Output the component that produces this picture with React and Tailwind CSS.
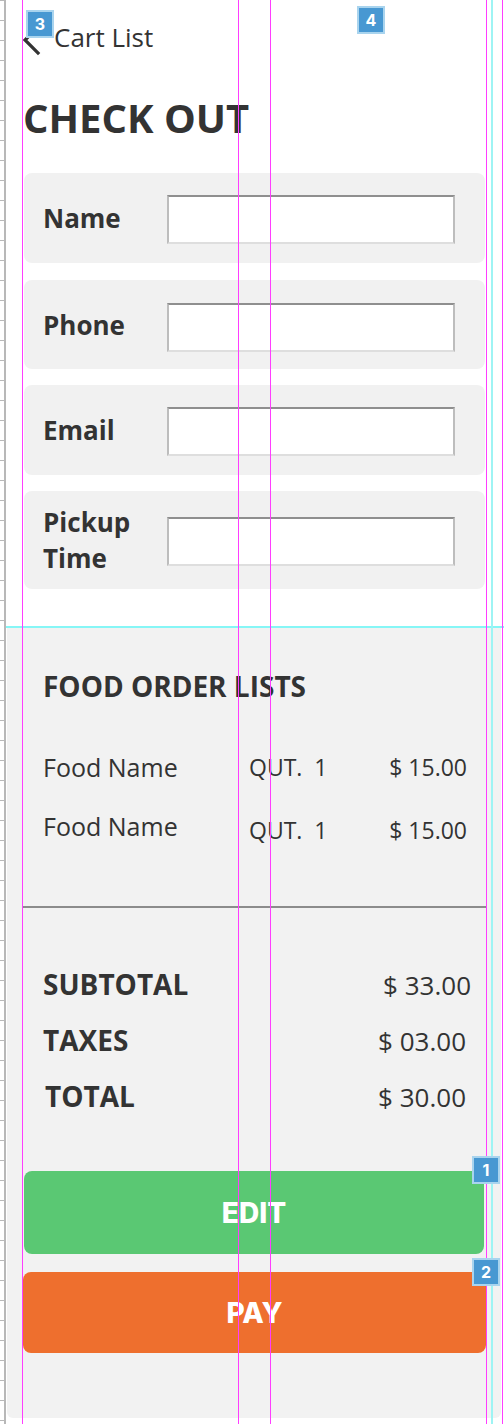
import React from 'react';

const labelCls = "text-[26px] font-bold leading-[36px] text-[#333]";

const FieldCard = ({ label, height, inputOffset = '' }) => (
  <div className={`flex items-center rounded-lg bg-[#f1f1f1] pl-[19px] pr-[30px] ${height}`}>
    <div className={`w-[124px] ${labelCls}`}>{label}</div>
    <input
      className={`h-[49px] flex-1 bg-white border-2 border-t-[#8f8f8f] border-l-[#bdbdbd] border-r-[#bdbdbd] border-b-[#dedede] outline-none ${inputOffset}`}
    />
  </div>
);

const Badge = ({ n, className }) => (
  <div
    className={`absolute z-20 flex h-[28px] w-[28px] items-center justify-center border-2 border-[#a9d4ee] bg-[#4898d2] text-[16px] font-bold text-white font-['Inter',sans-serif] ${className}`}
  >
    {n}
  </div>
);

// design-tool guides drawn over the page
const Guides = () => (
  <>
    <div className="absolute left-0 top-0 bottom-0 w-[7px] z-10">
      <div className="absolute left-[4px] top-0 bottom-0 w-[2px] bg-[#b8b8b8]" />
      {Array.from({ length: 72 }).map((_, i) => (
        <div key={i} className="absolute left-0 w-[5px] h-px bg-[#b8b8b8]" style={{ top: i * 20 }} />
      ))}
    </div>
    <div className="absolute left-[6px] right-0 top-[626px] h-[2px] bg-[#86f6f6] z-10" />
    <div className="absolute top-0 bottom-0 left-[491px] w-[2px] bg-[#9ef4f4] z-10" />
    <div className="absolute top-0 bottom-0 left-[22px] w-px bg-[#ff3dff] z-10" />
    <div className="absolute top-0 bottom-0 left-[238px] w-px bg-[#ff3dff] z-10" />
    <div className="absolute top-0 bottom-0 left-[270px] w-px bg-[#ff3dff] z-10" />
    <div className="absolute top-0 bottom-0 left-[486px] w-px bg-[#ff3dff] z-10" />
    <div className="absolute top-0 bottom-0 left-[502px] w-px bg-[#ff3dff] z-10" />
  </>
);

const FoodRow = ({ className = '', restCls = '' }) => (
  <div className={`flex h-[25px] items-start pl-[20px] pr-[19px] text-[#333] ${className}`}>
    <div className="w-[206px] text-[25px] leading-[25px]">Food Name</div>
    <div className={`flex-1 whitespace-pre text-[23px] leading-[25px] ${restCls}`}>QUT.  1</div>
    <div className={`text-[23px] leading-[25px] ${restCls}`}>$ 15.00</div>
  </div>
);

const TotalRow = ({ label, value, className = '', labelCls = '' }) => (
  <div className={`flex h-[28px] items-start justify-between pl-[20px] text-[#333] ${className}`}>
    <div className={`text-[28px] font-bold leading-[28px] ${labelCls}`}>{label}</div>
    <div className="text-[26px] leading-[28px] mt-[1px]">{value}</div>
  </div>
);

export default function App() {
  return (
    <div className="relative w-[504px] h-[1424px] overflow-hidden bg-white font-['Open_Sans',sans-serif] text-[#333]">
      <Guides />
      <Badge n="3" className="left-[26px] top-[10px]" />
      <Badge n="4" className="left-[357px] top-[6px]" />
      <Badge n="1" className="left-[472px] top-[1156px]" />
      <Badge n="2" className="left-[472px] top-[1258px]" />

      {/* top form */}
      <div className="pl-[24px] pr-[19px]">
        <div className="mt-[21px] flex items-center h-[32px]">
          <svg width="20" height="34" viewBox="0 0 20 34" className="-ml-[2px] mt-[4px]">
            <path d="M17 4 L3 18 L16 31" fill="none" stroke="#333" strokeWidth="3.2" strokeLinecap="square" />
          </svg>
          <span className="ml-[12px] text-[26px] leading-[32px]">Cart List</span>
        </div>
        <h1 className="mt-[45px] -ml-[1px] text-[40px] font-bold leading-[40px]">CHECK OUT</h1>

        <div className="mt-[35px] flex flex-col">
          <FieldCard label="Name" height="h-[90px]" inputOffset="mt-[3px]" />
          <div className="h-[17px]" />
          <FieldCard label="Phone" height="h-[89px]" inputOffset="mt-[6px]" />
          <div className="h-[16px]" />
          <FieldCard label="Email" height="h-[90px]" inputOffset="mt-[3px]" />
          <div className="h-[16px]" />
          <FieldCard label={<>Pickup<br />Time</>} height="h-[98px]" inputOffset="mt-[3px]" />
        </div>
      </div>

      {/* order summary */}
      <div className="mt-[38px] ml-[7px] mr-[3px] h-[791px] rounded-b-md bg-[#f2f2f2] pl-[16px] pr-[15px] pt-[45px]">
        <h2 className="pl-[20px] text-[28px] font-bold leading-[28px]">FOOD ORDER LISTS</h2>
        <FoodRow className="mt-[55px]" />
        <FoodRow className="mt-[34px]" restCls="mt-[4px]" />
        <div className="mt-[67px] h-[2px] bg-[#8c8c8c]" />

        <TotalRow label="SUBTOTAL" value="$ 33.00" className="mt-[62px] pr-[15px]" />
        <TotalRow label="TAXES" value="$ 03.00" className="mt-[28px] pr-[20px]" />
        <TotalRow label="TOTAL" value="$ 30.00" className="mt-[28px] pr-[20px]" labelCls="ml-[2px]" />

        <button className="mt-[61px] ml-[1px] flex h-[83px] w-[460px] items-center justify-center rounded-lg bg-[#5ac873] text-[28px] font-extrabold text-white font-['Inter',sans-serif]">
          EDIT
        </button>
        <button className="mt-[18px] flex h-[81px] w-full items-center justify-center rounded-lg bg-[#ee6f2e] text-[28px] font-extrabold text-white font-['Inter',sans-serif]">
          PAY
        </button>
      </div>
    </div>
  );
}
